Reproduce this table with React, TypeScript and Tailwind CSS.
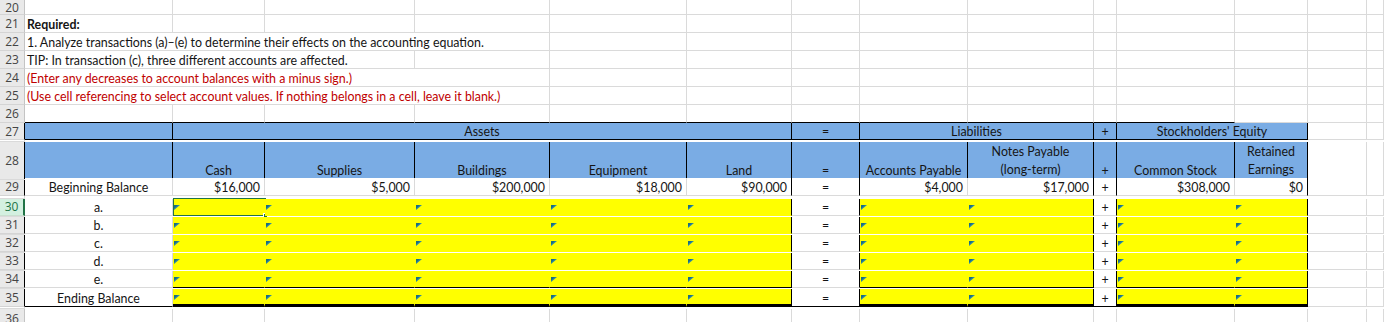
import React from "react"

// column template: row header, A..N
const COLS =
  "grid grid-cols-[25px_148px_92px_150px_135px_137px_105px_68px_108px_126px_23px_118px_73px_59px_1fr]"

const RG = "border-r-[#dadada]"
const RK = "border-r-black"
const RY = "border-r-[#ffff00]"
const BGR = "border-b-[#dadada]"
const BK = "border-b-black"
const BY = "border-b-[#ffff00]"
const BD = "border-b-[3px] border-b-black border-double"

const BLUE = "bg-[#7aace4]"
const YELLOW = "bg-[#ffff00]"
const WHITE = "bg-white"

type CellProps = {
  span?: string
  r?: string
  b?: string
  bg?: string
  className?: string
  children?: React.ReactNode
}

function Cell({ span = "", r = RG, b = BGR, bg = WHITE, className = "", children }: CellProps) {
  return (
    <div
      className={`relative flex items-end whitespace-nowrap border-r border-b border-solid ${span} ${r} ${b} ${bg} ${className}`}
    >
      {children}
    </div>
  )
}

function RowHead({ n, active, edge }: { n: number; active?: boolean; edge?: boolean }) {
  if (active) {
    return (
      <div className="flex items-center justify-center overflow-hidden border-b border-r-2 border-b-[#c9dfd0] border-r-[#217346] bg-[#d3f0e0] text-[12px] leading-[13px] text-[#217346] font-['Open_Sans',sans-serif]">
        {n}
      </div>
    )
  }
  return (
    <div
      className={`flex items-center justify-center overflow-hidden border-b border-r border-b-[#d4d4d4] bg-[#e9e9e9] text-[12px] leading-[13px] text-[#444] font-['Open_Sans',sans-serif] ${
        edge ? "border-r-black" : "border-r-[#c4c4c4]"
      }`}
    >
      {n}
    </div>
  )
}

function Row({
  n,
  h,
  active,
  edge,
  children,
}: {
  n: number
  h: string
  active?: boolean
  edge?: boolean
  children?: React.ReactNode
}) {
  return (
    <div className={`${COLS} ${h}`}>
      <RowHead n={n} active={active} edge={edge} />
      {children}
    </div>
  )
}

function Blank({ count }: { count: number }) {
  return (
    <>
      {Array.from({ length: count }).map((_, i) => (
        <Cell key={i} />
      ))}
    </>
  )
}

function Tri() {
  return (
    <svg className="absolute left-[1px] top-[6px]" width="6" height="5" viewBox="0 0 6 5">
      <polygon points="0,0 6,0 0,5" fill="#2a86a6" />
      <polygon points="0,0 4,0 0,3.5" fill="#1b6e80" />
    </svg>
  )
}

function Selection() {
  return (
    <div className="pointer-events-none absolute left-0 -top-px -right-[2px] -bottom-px border border-[#217346]">
      <div className="absolute -right-[3px] -bottom-[3px] h-[5px] w-[5px] border border-white bg-[#217346]" />
    </div>
  )
}

function Y({ b, sel }: { b: string; sel?: boolean }) {
  return (
    <Cell bg={YELLOW} r={RY} b={b}>
      <Tri />
      {sel && <Selection />}
    </Cell>
  )
}

function YE({ b }: { b: string }) {
  // yellow cell ending at a black vertical border
  return (
    <Cell bg={YELLOW} r={RK} b={b}>
      <Tri />
    </Cell>
  )
}

function EntryRow({ n, label, last, active }: { n: number; label: string; last?: boolean; active?: boolean }) {
  const yb = last ? BD : n === 34 ? BK : BY
  const sb = last ? BK : BGR
  return (
    <Row n={n} h={last ? "h-[20px]" : "h-[18px]"} edge active={active}>
      <Cell b={sb} className="justify-center">
        {label}
      </Cell>
      <Y b={yb} sel={active} />
      <Y b={yb} />
      <Y b={yb} />
      <Y b={yb} />
      <YE b={yb} />
      <Cell r={RK} b={sb} className="justify-center">
        =
      </Cell>
      <Y b={yb} />
      <YE b={yb} />
      <Cell r={RK} b={sb} className="justify-center">
        +
      </Cell>
      <Y b={yb} />
      <YE b={yb} />
      <Blank count={3} />
    </Row>
  )
}

export default function App() {
  const top = "border-b-black"
  return (
    <div className="h-[322px] w-[1384px] overflow-hidden bg-white font-['Lato',sans-serif] text-[12.4px] leading-[15px] text-[#151515]">
      <Row n={20} h="h-[15px]">
        <Blank count={14} />
      </Row>
      <Row n={21} h="h-[18px]">
        <Cell className="pl-[2px] font-bold">Required:</Cell>
        <Blank count={13} />
      </Row>
      <Row n={22} h="h-[18px]">
        <Cell span="col-span-4" className="pl-[2px]">
          1. Analyze transactions (a)–(e) to determine their effects on the accounting equation.
        </Cell>
        <Blank count={10} />
      </Row>
      <Row n={23} h="h-[18px]">
        <Cell span="col-span-3" className="pl-[2px]">
          TIP: In transaction (c), three different accounts are affected.
        </Cell>
        <Blank count={11} />
      </Row>
      <Row n={24} h="h-[18px]">
        <Cell span="col-span-4" className="pl-[2px] text-[#c00000]">
          (Enter any decreases to account balances with a minus sign.)
        </Cell>
        <Blank count={10} />
      </Row>
      <Row n={25} h="h-[18px]">
        <Cell span="col-span-4" className="pl-[2px] text-[#c00000]">
          (Use cell referencing to select account values. If nothing belongs in a cell, leave it blank.)
        </Cell>
        <Blank count={10} />
      </Row>
      <Row n={26} h="h-[18px]">
        {Array.from({ length: 11 }).map((_, i) => (
          <Cell key={i} b={top} />
        ))}
        <Blank count={3} />
      </Row>

      {/* header band */}
      <Row n={27} h="h-[19px]" edge>
        <Cell bg={BLUE} r={RK} b={BK} />
        <Cell span="col-span-5" bg={BLUE} r={RK} b={BK} className="justify-center">
          Assets
        </Cell>
        <Cell bg={BLUE} r={RK} b={BK} className="justify-center">
          =
        </Cell>
        <Cell span="col-span-2" bg={BLUE} r={RK} b={BK} className="justify-center">
          Liabilities
        </Cell>
        <Cell bg={BLUE} r={RK} b={BK} className="justify-center">
          +
        </Cell>
        <Cell span="col-span-2" bg={BLUE} r={RK} b={BK} className="justify-center">
          Stockholders' Equity
        </Cell>
        <Blank count={3} />
      </Row>
      <Row n={28} h="h-[36px]" edge>
        <Cell bg={BLUE} r={RK} b={BK} />
        {["Cash", "Supplies", "Buildings", "Equipment", "Land", "="].map((t) => (
          <Cell key={t} bg={BLUE} r={RK} b={BK} className="justify-center">
            {t}
          </Cell>
        ))}
        <Cell bg={BLUE} r={RK} b={BK} className="justify-center">
          Accounts Payable
        </Cell>
        <Cell bg={BLUE} r={RK} b={BK} className="justify-center">
          <div className="flex translate-y-[1px] flex-col items-center leading-[18px]">
            <span>Notes Payable</span>
            <span>(long-term)</span>
          </div>
        </Cell>
        <Cell bg={BLUE} r={RK} b={BK} className="justify-center">
          +
        </Cell>
        <Cell bg={BLUE} r={RK} b={BK} className="justify-center">
          Common Stock
        </Cell>
        <Cell bg={BLUE} r={RK} b={BK} className="justify-center">
          <div className="flex translate-y-[1px] flex-col items-center leading-[18px]">
            <span>Retained</span>
            <span>Earnings</span>
          </div>
        </Cell>
        <Blank count={3} />
      </Row>

      {/* beginning balances */}
      <Row n={29} h="h-[21px]" edge>
        <Cell className="justify-center">Beginning Balance</Cell>
        <Cell className="justify-end pr-1">$16,000</Cell>
        <Cell className="justify-end pr-1">$5,000</Cell>
        <Cell className="justify-end pr-1">$200,000</Cell>
        <Cell className="justify-end pr-1">$18,000</Cell>
        <Cell r={RK} className="justify-end pr-1">
          $90,000
        </Cell>
        <Cell r={RK} className="justify-center">
          =
        </Cell>
        <Cell className="justify-end pr-1">$4,000</Cell>
        <Cell r={RK} className="justify-end pr-1">
          $17,000
        </Cell>
        <Cell r={RK} className="justify-center">
          +
        </Cell>
        <Cell className="justify-end pr-1">$308,000</Cell>
        <Cell r={RK} className="justify-end pr-1">
          $0
        </Cell>
        <Blank count={3} />
      </Row>

      <EntryRow n={30} label="a." active />
      <EntryRow n={31} label="b." />
      <EntryRow n={32} label="c." />
      <EntryRow n={33} label="d." />
      <EntryRow n={34} label="e." />
      <EntryRow n={35} label="Ending Balance" last />

      <Row n={36} h="h-[20px]">
        <Blank count={14} />
      </Row>
    </div>
  )
}
